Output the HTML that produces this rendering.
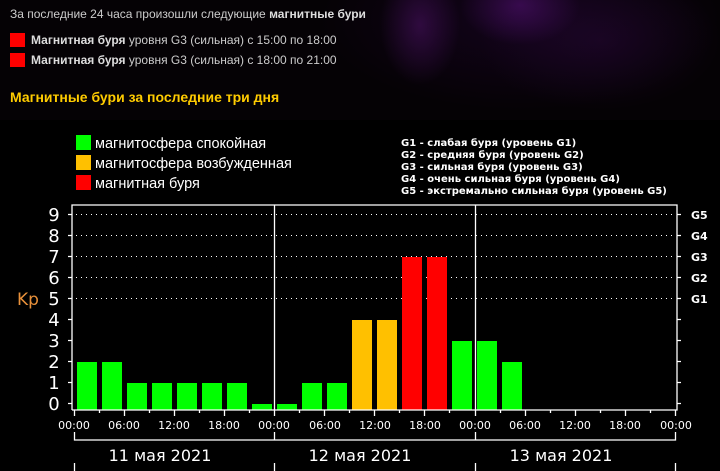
<!DOCTYPE html>
<html><head><meta charset="utf-8"><style>
html,body{margin:0;padding:0;width:720px;height:471px;overflow:hidden;background:#000;}
body{position:relative;font-family:"Liberation Sans",Arial,sans-serif;
background:
radial-gradient(ellipse 40px 60px at 420px 25px, rgba(90,20,120,0.45), transparent),
radial-gradient(ellipse 60px 40px at 520px 5px, rgba(100,20,140,0.45), transparent),
radial-gradient(ellipse 120px 70px at 600px 40px, rgba(50,10,70,0.35), transparent),
radial-gradient(ellipse 200px 90px at 520px 20px, rgba(40,5,60,0.4), transparent),
#050205;}
.t{position:absolute;color:#ccc;font-size:12px;white-space:nowrap;}
.t b{color:#ddd;}
.sq{position:absolute;width:15px;height:14px;background:#f00;}
</style></head><body>
<div class="t" style="left:10px;top:7px">За последние 24 часа произошли следующие <b>магнитные бури</b></div>
<div class="sq" style="left:10px;top:33px"></div>
<div class="t" style="left:31px;top:33px"><b>Магнитная буря</b> уровня G3 (сильная) с 15:00 по 18:00</div>
<div class="sq" style="left:10px;top:53px"></div>
<div class="t" style="left:31px;top:53px"><b>Магнитная буря</b> уровня G3 (сильная) с 18:00 по 21:00</div>
<div class="t" style="left:10px;top:89px;color:#ffcc00;font-weight:bold;font-size:14px">Магнитные бури за последние три дня</div>

<svg width="720" height="471" style="position:absolute;left:0;top:0;background:transparent">
<rect x="0" y="120" width="720" height="351" fill="#000"/>
<g font-family="Liberation Sans, sans-serif" font-size="14.5" fill="#fff">
<rect x="76" y="135" width="15" height="15" fill="#00ff00"/><text x="95" y="148">магнитосфера спокойная</text>
<rect x="76" y="155" width="15" height="15" fill="#ffc000"/><text x="95" y="168">магнитосфера возбужденная</text>
<rect x="76" y="175" width="15" height="15" fill="#ff0000"/><text x="95" y="188">магнитная буря</text>
</g>
<g font-family="DejaVu Sans, sans-serif" font-size="10" font-weight="bold" fill="#fff">
<text x="401" y="146">G1 - слабая буря (уровень G1)</text>
<text x="401" y="158">G2 - средняя буря (уровень G2)</text>
<text x="401" y="170">G3 - сильная буря (уровень G3)</text>
<text x="401" y="182">G4 - очень сильная буря (уровень G4)</text>
<text x="401" y="194">G5 - экстремально сильная буря (уровень G5)</text>
</g>
<g stroke="#fff" stroke-width="1" stroke-dasharray="1 4">
<line x1="76" y1="214.5" x2="676" y2="214.5"/><line x1="76" y1="235.5" x2="676" y2="235.5"/>
<line x1="76" y1="256.5" x2="676" y2="256.5"/><line x1="76" y1="277.5" x2="676" y2="277.5"/>
<line x1="76" y1="298.5" x2="676" y2="298.5"/>
</g>
<g fill="#00ff00">
<rect x="77" y="362" width="20" height="48"/><rect x="102" y="362" width="20" height="48"/>
<rect x="127" y="383" width="20" height="27"/><rect x="152" y="383" width="20" height="27"/>
<rect x="177" y="383" width="20" height="27"/><rect x="202" y="383" width="20" height="27"/>
<rect x="227" y="383" width="20" height="27"/><rect x="252" y="404" width="20" height="6"/>
<rect x="277" y="404" width="20" height="6"/><rect x="302" y="383" width="20" height="27"/>
<rect x="327" y="383" width="20" height="27"/>
<rect x="452" y="341" width="20" height="69"/><rect x="477" y="341" width="20" height="69"/>
<rect x="502" y="362" width="20" height="48"/>
</g>
<g fill="#ffc000"><rect x="352" y="320" width="20" height="90"/><rect x="377" y="320" width="20" height="90"/></g>
<g fill="#ff0000"><rect x="402" y="257" width="20" height="153"/><rect x="427" y="257" width="20" height="153"/></g>
<g stroke="#fff" stroke-width="1.3" fill="none">
<polyline points="72,410 72,205 677,205 677,410 72,410"/>
<line x1="274.5" y1="205" x2="274.5" y2="410"/><line x1="475.5" y1="205" x2="475.5" y2="410"/>
<path d="M68 214.5h4M68 235.5h4M68 256.5h4M68 277.5h4M68 298.5h4M68 319.5h4M68 340.5h4M68 361.5h4M68 382.5h4M68 403.5h4"/>
<path d="M677 214.5h4M677 235.5h4M677 256.5h4M677 277.5h4M677 298.5h4M677 319.5h4M677 340.5h4M677 361.5h4M677 382.5h4M677 403.5h4"/>
<path d="M74.5 410v6M99.5 410v3M124.5 410v6M149.5 410v3M174.5 410v6M199.5 410v3M224.5 410v6M249.5 410v3M274.5 410v6M299.5 410v3M324.5 410v6M349.5 410v3M374.5 410v6M399.5 410v3M424.5 410v6M449.5 410v3M475.5 410v6M500.5 410v3M525.5 410v6M550.5 410v3M575.5 410v6M600.5 410v3M625.5 410v6M650.5 410v3M675.5 410v6"/>
<path d="M74.5 432v8h601v-8M274.5 432v8M475.5 432v8"/>
<path d="M74.5 463v8M274.5 463v8M475.5 463v8M675.5 463v8"/>
</g>
<g font-family="DejaVu Sans, sans-serif" font-size="11" fill="#fff" text-anchor="middle">
<text x="74" y="429">00:00</text><text x="124" y="429">06:00</text><text x="174" y="429">12:00</text><text x="224" y="429">18:00</text>
<text x="274" y="429">00:00</text><text x="325" y="429">06:00</text><text x="375" y="429">12:00</text><text x="425" y="429">18:00</text>
<text x="475" y="429">00:00</text><text x="525" y="429">06:00</text><text x="575" y="429">12:00</text><text x="625" y="429">18:00</text>
<text x="676" y="429">00:00</text>
</g>
<g font-family="DejaVu Sans, sans-serif" font-size="16" fill="#fff" text-anchor="middle">
<text x="160" y="461">11 мая 2021</text><text x="360" y="461">12 мая 2021</text><text x="561" y="461">13 мая 2021</text>
</g>
<g font-family="DejaVu Sans, sans-serif" font-size="18" fill="#fff" text-anchor="middle">
<text x="54" y="221">9</text><text x="54" y="242">8</text><text x="54" y="263">7</text><text x="54" y="284">6</text>
<text x="54" y="305">5</text><text x="54" y="326">4</text><text x="54" y="347">3</text><text x="54" y="368">2</text>
<text x="54" y="389">1</text><text x="54" y="410">0</text>
</g>
<text x="17" y="305" font-family="DejaVu Sans, sans-serif" font-size="17" fill="#e8903a">Kp</text>
<g font-family="DejaVu Sans, sans-serif" font-size="11" font-weight="bold" fill="#fff">
<text x="691" y="219">G5</text><text x="691" y="240">G4</text><text x="691" y="261">G3</text>
<text x="691" y="282">G2</text><text x="691" y="303">G1</text>
</g>
</svg>
</body></html>
